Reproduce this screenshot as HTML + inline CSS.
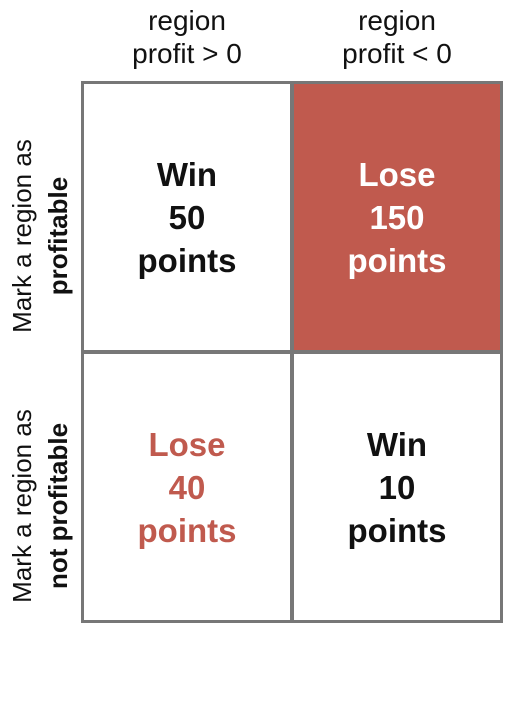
<!DOCTYPE html>
<html><head><style>
body{margin:0;width:520px;height:720px;background:#fff;font-family:"Liberation Sans",sans-serif;position:relative;overflow:hidden}
.h{position:absolute;top:4px;width:210px;text-align:center;font-size:28px;line-height:33px;color:#111}
.c{position:absolute;box-sizing:border-box;width:212px;height:272px;border:3px solid #777;display:flex;align-items:center;justify-content:center;text-align:center;font-size:33px;font-weight:bold;line-height:43px;color:#111;background:#fff}
.red{background:#c05a4e;color:#fff}
.rt{color:#c05a4e}
.v{position:absolute;width:300px;text-align:center;font-size:26px;line-height:36px;transform:rotate(-90deg);color:#111}
</style></head><body>
<div class="h" style="left:82px">region<br>profit &gt; 0</div>
<div class="h" style="left:292px">region<br>profit &lt; 0</div>
<div class="v" style="left:-110px;top:200px">Mark a region as<br><b>profitable</b></div>
<div class="v" style="left:-110px;top:470px">Mark a region as<br><b>not profitable</b></div>
<div class="c" style="left:81px;top:81px">Win<br>50<br>points</div>
<div class="c red" style="left:291px;top:81px">Lose<br>150<br>points</div>
<div class="c rt" style="left:81px;top:351px">Lose<br>40<br>points</div>
<div class="c" style="left:291px;top:351px">Win<br>10<br>points</div>
<div style="position:absolute;left:291px;top:81px;width:212px;height:272px;box-sizing:border-box;border:3px solid #777;border-left-color:#777"></div>
</body></html>
